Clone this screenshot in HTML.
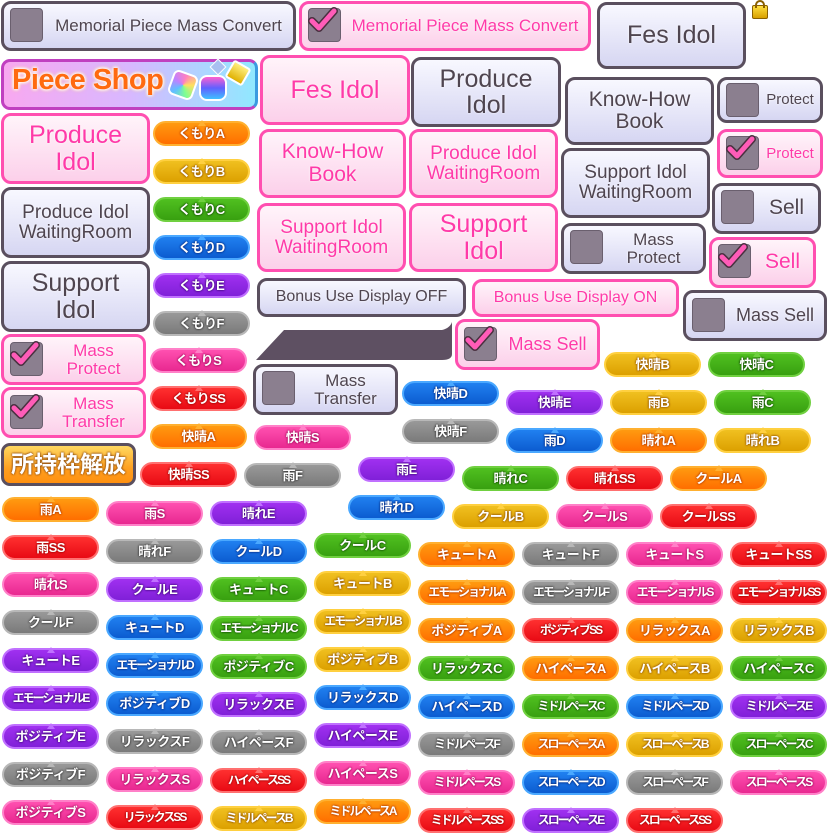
<!DOCTYPE html>
<html><head><meta charset="utf-8"><style>
*{margin:0;padding:0;box-sizing:border-box}
body{width:836px;height:836px;background:#fff;position:relative;overflow:hidden;font-family:"Liberation Sans","Noto Sans CJK JP",sans-serif}
.p{position:absolute;width:97px;height:25px;border-radius:13px;border:2px solid;color:#fff;font-weight:bold;font-size:13px;line-height:21px;text-align:center;white-space:nowrap;letter-spacing:-0.5px;overflow:visible}
.p.l{font-size:12px;letter-spacing:-2px}
.p:before{content:"";position:absolute;left:50%;top:-7px;margin-left:-4px;border:4px solid transparent;border-bottom:6px solid;border-bottom-color:inherit}
.a{background:linear-gradient(#ff9a10,#ff6e00);border-color:#ffb030;text-shadow:0 0 2px #b03800,0 0 2px #b03800}
.b{background:linear-gradient(#f0c020,#dca000);border-color:#ffd040;text-shadow:0 0 2px #905000,0 0 2px #905000}
.c{background:linear-gradient(#50c020,#38a010);border-color:#70d040;text-shadow:0 0 2px #104800,0 0 2px #104800}
.d{background:linear-gradient(#2080f0,#0c5cd0);border-color:#4aa8ff;text-shadow:0 0 2px #062a80,0 0 2px #062a80}
.e{background:linear-gradient(#a030f0,#8020d8);border-color:#c070ff;text-shadow:0 0 2px #40087a,0 0 2px #40087a}
.f{background:linear-gradient(#999,#7a7a7a);border-color:#b8b8b8;text-shadow:0 0 2px #333,0 0 2px #333}
.s{background:linear-gradient(#ff50b0,#e82890);border-color:#ff80c8;text-shadow:0 0 2px #a00a5a,0 0 2px #a00a5a}
.ss{background:linear-gradient(#ff3030,#e80a14);border-color:#ff7070;text-shadow:0 0 2px #a00000,0 0 2px #a00000}
.g,.k{position:absolute;border-radius:10px;border:3px solid #5a4f5e;background:linear-gradient(#f8f8ff,#d6d6f2);color:#4f4550;text-align:center;display:flex;align-items:center;justify-content:center;line-height:1.05;text-shadow:0 0 2px #fff}
.k{border-color:#ff4fb0;background:linear-gradient(#fff4fa,#fcd0ea);color:#ff3aa8}
.cb{position:absolute;width:26px;height:26px;border-radius:4px;background:#8b7f8f;border:1px solid #6a5f6e}
.cb svg{position:absolute;left:-2px;top:-4px}
</style></head><body>
<svg width="0" height="0" style="position:absolute"><defs><g id="ck"><path d="M5 16 L12 23 L27 6" fill="none" stroke="#4a3040" stroke-width="8" stroke-linecap="round" stroke-linejoin="round"/><path d="M5 16 L12 23 L27 6" fill="none" stroke="#ff5cb8" stroke-width="5" stroke-linecap="round" stroke-linejoin="round"/></g></defs></svg>

<div class="g" style="left:1px;top:1px;width:295px;height:50px;font-size:17px;padding-left:40px">Memorial Piece Mass Convert</div>
<div class="cb" style="left:10px;top:8px;width:33px;height:34px"></div>
<div class="k" style="left:299px;top:1px;width:292px;height:50px;font-size:17px;padding-left:40px">Memorial Piece Mass Convert</div>
<div class="cb" style="left:308px;top:8px;width:33px;height:34px"><svg width="34" height="34"><use href="#ck"/></svg></div>
<div class="g" style="left:597px;top:2px;width:149px;height:67px;font-size:25px">Fes Idol</div>
<div style="position:absolute;left:752px;top:5px;width:16px;height:14px;background:linear-gradient(#ffe040,#d8a000);border:1px solid #8a6000;border-radius:2px"></div>
<div style="position:absolute;left:755px;top:0;width:10px;height:8px;border:2px solid #8a6000;border-bottom:none;border-radius:5px 5px 0 0"></div>

<div style="position:absolute;left:1px;top:59px;width:257px;height:51px;border-radius:9px;border:3px solid #c040c0;border-right-color:#3a9ae0;background:linear-gradient(90deg,#f8a8f0,#d8b8ff 50%,#90e8ff)"></div>
<div style="position:absolute;left:12px;top:64px;font-size:29px;font-weight:bold;letter-spacing:-0.5px;color:#ff6a10;text-shadow:0 0 3px #fff,0 0 3px #fff,0 0 4px #fff,0 0 5px #ffb060">Piece Shop</div>
<div style="position:absolute;left:170px;top:72px;width:26px;height:26px;border-radius:6px;background:conic-gradient(#ff80c0,#ffe060,#80ff90,#60c0ff,#c080ff,#ff80c0);border:2px solid #fff;transform:rotate(20deg)"></div>
<div style="position:absolute;left:199px;top:75px;width:28px;height:26px;border-radius:8px;background:linear-gradient(#ff60d0,#6060ff,#40c0ff);border:2px solid #fff"></div>
<div style="position:absolute;left:212px;top:61px;width:12px;height:12px;background:#a8c0f0;border:1px solid #fff;transform:rotate(45deg)"></div>
<div style="position:absolute;left:228px;top:63px;width:20px;height:20px;background:linear-gradient(#fff080,#e0b000);border:2px solid #fff;border-radius:3px;transform:rotate(30deg)"></div>

<div class="k" style="left:260px;top:55px;width:150px;height:70px;font-size:25px">Fes Idol</div>
<div class="g" style="left:411px;top:57px;width:150px;height:70px;font-size:25px">Produce<br>Idol</div>
<div class="g" style="left:565px;top:77px;width:149px;height:68px;font-size:21px">Know-How<br>Book</div>
<div class="g" style="left:717px;top:77px;width:106px;height:46px;font-size:15px;padding-left:40px">Protect</div>
<div class="cb" style="left:726px;top:83px;width:33px;height:34px"></div>
<div class="k" style="left:1px;top:113px;width:149px;height:71px;font-size:25px">Produce<br>Idol</div>
<div class="k" style="left:259px;top:129px;width:147px;height:69px;font-size:21px">Know-How<br>Book</div>
<div class="k" style="left:409px;top:129px;width:149px;height:69px;font-size:19px">Produce Idol<br>WaitingRoom</div>
<div class="k" style="left:717px;top:129px;width:106px;height:49px;font-size:15px;padding-left:40px">Protect</div>
<div class="cb" style="left:726px;top:136px;width:33px;height:34px"><svg width="34" height="34"><use href="#ck"/></svg></div>
<div class="g" style="left:561px;top:148px;width:149px;height:70px;font-size:19px">Support Idol<br>WaitingRoom</div>
<div class="g" style="left:712px;top:183px;width:109px;height:51px;font-size:21px;padding-left:40px">Sell</div>
<div class="cb" style="left:721px;top:190px;width:33px;height:34px"></div>
<div class="g" style="left:1px;top:187px;width:149px;height:71px;font-size:19px">Produce Idol<br>WaitingRoom</div>
<div class="k" style="left:257px;top:203px;width:149px;height:69px;font-size:19px">Support Idol<br>WaitingRoom</div>
<div class="k" style="left:409px;top:203px;width:149px;height:69px;font-size:25px">Support<br>Idol</div>
<div class="g" style="left:561px;top:223px;width:145px;height:51px;font-size:17px;padding-left:40px">Mass<br>Protect</div>
<div class="cb" style="left:570px;top:230px;width:33px;height:34px"></div>
<div class="k" style="left:709px;top:237px;width:107px;height:51px;font-size:21px;padding-left:40px">Sell</div>
<div class="cb" style="left:718px;top:244px;width:33px;height:34px"><svg width="34" height="34"><use href="#ck"/></svg></div>
<div class="g" style="left:1px;top:261px;width:149px;height:71px;font-size:25px">Support<br>Idol</div>
<div class="g" style="left:257px;top:278px;width:209px;height:39px;font-size:16px">Bonus Use Display OFF</div>
<div class="k" style="left:472px;top:279px;width:207px;height:38px;font-size:16px">Bonus Use Display ON</div>
<div class="g" style="left:683px;top:290px;width:144px;height:51px;font-size:18px;padding-left:40px">Mass Sell</div>
<div class="cb" style="left:692px;top:298px;width:33px;height:34px"></div>
<div class="k" style="left:1px;top:334px;width:145px;height:51px;font-size:17px;padding-left:40px">Mass<br>Protect</div>
<div class="cb" style="left:10px;top:342px;width:33px;height:34px"><svg width="34" height="34"><use href="#ck"/></svg></div>
<svg style="position:absolute;left:256px;top:320px" width="198" height="42"><path d="M28 10 H186 Q194 8 196 2 V34 Q196 40 186 40 H0 Z" fill="#5e5062"/></svg>
<div class="k" style="left:455px;top:319px;width:145px;height:51px;font-size:18px;padding-left:40px">Mass Sell</div>
<div class="cb" style="left:464px;top:327px;width:33px;height:34px"><svg width="34" height="34"><use href="#ck"/></svg></div>
<div class="g" style="left:253px;top:364px;width:145px;height:51px;font-size:17px;padding-left:40px">Mass<br>Transfer</div>
<div class="cb" style="left:262px;top:371px;width:33px;height:34px"></div>
<div class="k" style="left:1px;top:387px;width:145px;height:51px;font-size:17px;padding-left:40px">Mass<br>Transfer</div>
<div class="cb" style="left:10px;top:395px;width:33px;height:34px"><svg width="34" height="34"><use href="#ck"/></svg></div>
<div style="position:absolute;left:1px;top:443px;width:135px;height:43px;border-radius:9px;border:3px solid #5a4f5e;background:linear-gradient(#ffd860,#ffa020 60%,#ff9010);color:#fff;font-size:23px;font-weight:bold;text-align:center;line-height:37px;text-shadow:0 0 2px #8a4a10,0 0 2px #8a4a10">所持枠解放</div>

<div class="p a" style="left:153px;top:121px">くもりA</div>
<div class="p b" style="left:153px;top:159px">くもりB</div>
<div class="p c" style="left:153px;top:197px">くもりC</div>
<div class="p d" style="left:153px;top:235px">くもりD</div>
<div class="p e" style="left:153px;top:273px">くもりE</div>
<div class="p f" style="left:153px;top:311px">くもりF</div>
<div class="p s" style="left:150px;top:348px">くもりS</div>
<div class="p ss" style="left:150px;top:386px">くもりSS</div>
<div class="p a" style="left:150px;top:424px">快晴A</div>
<div class="p s" style="left:254px;top:425px">快晴S</div>
<div class="p ss" style="left:140px;top:462px">快晴SS</div>
<div class="p f" style="left:244px;top:463px">雨F</div>
<div class="p e" style="left:358px;top:457px">雨E</div>
<div class="p d" style="left:402px;top:381px">快晴D</div>
<div class="p f" style="left:402px;top:419px">快晴F</div>
<div class="p e" style="left:506px;top:390px">快晴E</div>
<div class="p d" style="left:506px;top:428px">雨D</div>
<div class="p b" style="left:604px;top:352px">快晴B</div>
<div class="p c" style="left:708px;top:352px">快晴C</div>
<div class="p b" style="left:610px;top:390px">雨B</div>
<div class="p c" style="left:714px;top:390px">雨C</div>
<div class="p a" style="left:610px;top:428px">晴れA</div>
<div class="p b" style="left:714px;top:428px">晴れB</div>
<div class="p d" style="left:348px;top:495px">晴れD</div>
<div class="p c" style="left:462px;top:466px">晴れC</div>
<div class="p ss" style="left:566px;top:466px">晴れSS</div>
<div class="p a" style="left:670px;top:466px">クールA</div>
<div class="p b" style="left:452px;top:504px">クールB</div>
<div class="p s" style="left:556px;top:504px">クールS</div>
<div class="p ss" style="left:660px;top:504px">クールSS</div>

<div class="p a" style="left:2px;top:497px">雨A</div>
<div class="p ss" style="left:2px;top:535px">雨SS</div>
<div class="p s" style="left:2px;top:572px">晴れS</div>
<div class="p f" style="left:2px;top:610px">クールF</div>
<div class="p e" style="left:2px;top:648px">キュートE</div>
<div class="p e l" style="left:2px;top:686px">エモーショナルE</div>
<div class="p e" style="left:2px;top:724px">ポジティブE</div>
<div class="p f" style="left:2px;top:762px">ポジティブF</div>
<div class="p s" style="left:2px;top:800px">ポジティブS</div>

<div class="p s" style="left:106px;top:501px">雨S</div>
<div class="p f" style="left:106px;top:539px">晴れF</div>
<div class="p e" style="left:106px;top:577px">クールE</div>
<div class="p d" style="left:106px;top:615px">キュートD</div>
<div class="p d l" style="left:106px;top:653px">エモーショナルD</div>
<div class="p d" style="left:106px;top:691px">ポジティブD</div>
<div class="p f" style="left:106px;top:729px">リラックスF</div>
<div class="p s" style="left:106px;top:767px">リラックスS</div>
<div class="p ss l" style="left:106px;top:805px">リラックスSS</div>

<div class="p e" style="left:210px;top:501px">晴れE</div>
<div class="p d" style="left:210px;top:539px">クールD</div>
<div class="p c" style="left:210px;top:577px">キュートC</div>
<div class="p c l" style="left:210px;top:616px">エモーショナルC</div>
<div class="p c" style="left:210px;top:654px">ポジティブC</div>
<div class="p e" style="left:210px;top:692px">リラックスE</div>
<div class="p f" style="left:210px;top:730px">ハイペースF</div>
<div class="p ss l" style="left:210px;top:768px">ハイペースSS</div>
<div class="p b l" style="left:210px;top:806px">ミドルペースB</div>

<div class="p c" style="left:314px;top:533px">クールC</div>
<div class="p b" style="left:314px;top:571px">キュートB</div>
<div class="p b l" style="left:314px;top:609px">エモーショナルB</div>
<div class="p b" style="left:314px;top:647px">ポジティブB</div>
<div class="p d" style="left:314px;top:685px">リラックスD</div>
<div class="p e" style="left:314px;top:723px">ハイペースE</div>
<div class="p s" style="left:314px;top:761px">ハイペースS</div>
<div class="p a l" style="left:314px;top:799px">ミドルペースA</div>

<div class="p a" style="left:418px;top:542px">キュートA</div>
<div class="p a l" style="left:418px;top:580px">エモーショナルA</div>
<div class="p a" style="left:418px;top:618px">ポジティブA</div>
<div class="p c" style="left:418px;top:656px">リラックスC</div>
<div class="p d" style="left:418px;top:694px">ハイペースD</div>
<div class="p f l" style="left:418px;top:732px">ミドルペースF</div>
<div class="p s l" style="left:418px;top:770px">ミドルペースS</div>
<div class="p ss l" style="left:418px;top:808px">ミドルペースSS</div>

<div class="p f" style="left:522px;top:542px">キュートF</div>
<div class="p f l" style="left:522px;top:580px">エモーショナルF</div>
<div class="p ss l" style="left:522px;top:618px">ポジティブSS</div>
<div class="p a" style="left:522px;top:656px">ハイペースA</div>
<div class="p c l" style="left:522px;top:694px">ミドルペースC</div>
<div class="p a l" style="left:522px;top:732px">スローペースA</div>
<div class="p d l" style="left:522px;top:770px">スローペースD</div>
<div class="p e l" style="left:522px;top:808px">スローペースE</div>

<div class="p s" style="left:626px;top:542px">キュートS</div>
<div class="p s l" style="left:626px;top:580px">エモーショナルS</div>
<div class="p a" style="left:626px;top:618px">リラックスA</div>
<div class="p b" style="left:626px;top:656px">ハイペースB</div>
<div class="p d l" style="left:626px;top:694px">ミドルペースD</div>
<div class="p b l" style="left:626px;top:732px">スローペースB</div>
<div class="p f l" style="left:626px;top:770px">スローペースF</div>
<div class="p ss l" style="left:626px;top:808px">スローペースSS</div>

<div class="p ss" style="left:730px;top:542px">キュートSS</div>
<div class="p ss l" style="left:730px;top:580px">エモーショナルSS</div>
<div class="p b" style="left:730px;top:618px">リラックスB</div>
<div class="p c" style="left:730px;top:656px">ハイペースC</div>
<div class="p e l" style="left:730px;top:694px">ミドルペースE</div>
<div class="p c l" style="left:730px;top:732px">スローペースC</div>
<div class="p s l" style="left:730px;top:770px">スローペースS</div>
</body></html>
